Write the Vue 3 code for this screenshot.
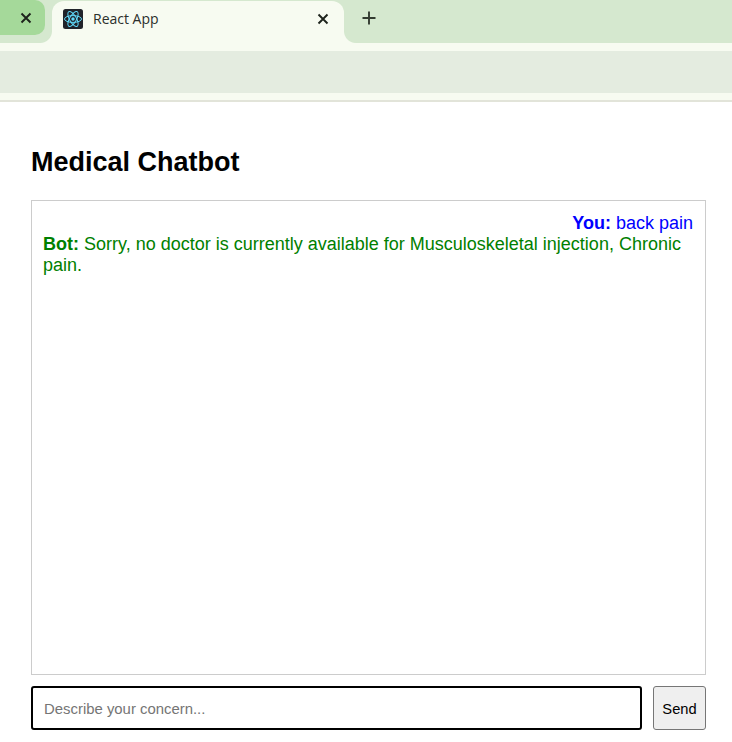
<template>
  <div class="browser">
    <div class="tab-strip">
      <div class="tab-prev">
        <svg class="close" viewBox="0 0 12 12"><path d="M1.5 1.5l9 9M10.5 1.5l-9 9" /></svg>
      </div>
      <div class="tab-active">
        <svg class="favicon" viewBox="0 0 20 20">
          <rect width="20" height="20" rx="2.5" fill="#20232a" />
          <g fill="none" stroke="#61dafb" stroke-width="1">
            <ellipse cx="10" cy="10" rx="8.5" ry="3.4" />
            <ellipse cx="10" cy="10" rx="8.5" ry="3.4" transform="rotate(60 10 10)" />
            <ellipse cx="10" cy="10" rx="8.5" ry="3.4" transform="rotate(120 10 10)" />
          </g>
          <circle cx="10" cy="10" r="1.7" fill="#61dafb" />
        </svg>
        <span class="tab-title">React App</span>
        <svg class="close" viewBox="0 0 12 12"><path d="M1.5 1.5l9 9M10.5 1.5l-9 9" /></svg>
      </div>
      <svg class="new-tab" viewBox="0 0 14 14"><path d="M7 .5v13M.5 7h13" /></svg>
    </div>
    <div class="toolbar"><div class="address"></div></div>
  </div>

  <div class="chat">
    <h2>Medical Chatbot</h2>
    <div class="messages">
      <div v-for="(m, i) in messages" :key="i" class="message" :class="m.from">
        <strong>{{ m.from === 'user' ? 'You:' : 'Bot:' }}</strong> {{ m.text }}
      </div>
    </div>
    <div class="input-row">
      <input v-model="draft" type="text" placeholder="Describe your concern..." />
      <button>Send</button>
    </div>
  </div>
</template>

<script setup>
import { ref } from 'vue'

const draft = ref('')
const messages = ref([
  { from: 'user', text: 'back pain' },
  { from: 'bot', text: 'Sorry, no doctor is currently available for Musculoskeletal injection, Chronic pain.' }
])
</script>

<style>
html, body {
  margin: 0;
  background: #fff;
  overflow: hidden;
}
</style>

<style scoped>
.browser {
  font-family: "Open Sans", "Noto Sans", sans-serif;
}

.tab-strip {
  display: flex;
  align-items: flex-start;
  height: 43px;
  background: #d5e8cf;
}

.tab-prev {
  position: relative;
  z-index: 1;
  display: flex;
  align-items: center;
  justify-content: flex-end;
  width: 45px;
  height: 35px;
  margin-right: 7px;
  padding-right: 13px;
  box-sizing: border-box;
  background: #a5d99a;
  border-radius: 0 10px 10px 0;
}

.tab-active {
  position: relative;
  display: flex;
  align-items: center;
  width: 292px;
  height: 42px;
  margin-top: 1px;
  padding: 0 15px 7px 11px;
  box-sizing: border-box;
  background: #f7fbf1;
  border-radius: 12px 12px 0 0;
}

/* concave corners where the tab flows into the toolbar */
.tab-active::before,
.tab-active::after {
  content: "";
  position: absolute;
  bottom: 0;
  width: 12px;
  height: 12px;
}

.tab-active::before {
  left: -12px;
  background: radial-gradient(circle at 0 0, #d5e8cf 11.5px, #f7fbf1 12.5px);
}

.tab-active::after {
  right: -12px;
  background: radial-gradient(circle at 100% 0, #d5e8cf 11.5px, #f7fbf1 12.5px);
}

.favicon {
  width: 20px;
  height: 20px;
  margin-right: 10px;
}

.tab-title {
  flex: 1;
  font-size: 14px;
  color: #2b2f2b;
}

.close {
  width: 12px;
  height: 12px;
  fill: none;
  stroke: #1d231c;
  stroke-width: 1.9;
}

.new-tab {
  width: 14px;
  height: 14px;
  margin: 11px 0 0 18px;
  fill: none;
  stroke: #333b31;
  stroke-width: 1.9;
}

.toolbar {
  height: 42px;
  padding: 8px 0 7px;
  background: #f7fbf1;
  border-bottom: 2px solid #e2e4d9;
}

.address {
  height: 42px;
  background: #e4ece0;
}

.chat {
  display: flex;
  flex-direction: column;
  padding: 0 26px 0 31px;
  font-family: "Liberation Sans", Arial, sans-serif;
}

h2 {
  margin: 45px 0 23px;
  font-size: 27px;
  line-height: 30px;
  color: #000;
}

.messages {
  height: 450px;
  padding: 12px 12px 11px 11px;
  border: 1px solid #ccc;
}

.message {
  font-size: 18px;
  line-height: 21px;
}

.message.user {
  text-align: right;
  color: #0000ff;
}

.message.bot {
  text-align: left;
  color: #008000;
}

.input-row {
  display: flex;
  gap: 11px;
  margin-top: 11px;
}

input {
  flex: 1;
  min-width: 0;
  height: 44px;
  padding: 1px 11px 0;
  box-sizing: border-box;
  font-family: inherit;
  font-size: 14.9px;
  border: 2px solid #000;
  border-radius: 3px;
  outline: none;
}

input::placeholder {
  color: #757575;
}

button {
  width: 53px;
  height: 44px;
  padding: 1px 0 0;
  font-family: inherit;
  font-size: 14.7px;
  color: #000;
  background: #efefef;
  border: 1px solid #767676;
  border-radius: 3px;
}
</style>
